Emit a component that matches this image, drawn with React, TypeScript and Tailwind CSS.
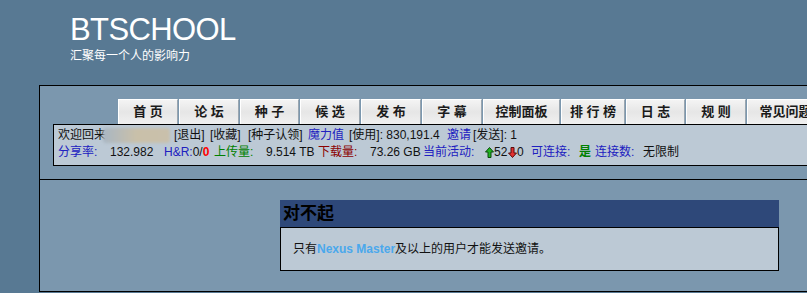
import React from 'react';

const tabs = [
  { label: '首 页', w: 'w-[60px]' },
  { label: '论 坛', w: 'w-[60px]' },
  { label: '种 子', w: 'w-[59px]' },
  { label: '候 选', w: 'w-[60px]' },
  { label: '发 布', w: 'w-[60px]' },
  { label: '字 幕', w: 'w-[60px]' },
  { label: '控制面板', w: 'w-[77px]' },
  { label: '排 行 榜', w: 'w-[64px]' },
  { label: '日 志', w: 'w-[59px]' },
  { label: '规 则', w: 'w-[60px]' },
  { label: '常见问题', w: 'w-[77px]' },
];

const UpArrow = () => (
  <svg width="9" height="11" viewBox="0 0 9 11">
    <path d="M4.5 0.5 L8.5 5 L6 5 L6 10.5 L3 10.5 L3 5 L0.5 5 Z" fill="#22b322" stroke="#0b4a0b" strokeWidth="1" />
  </svg>
);

const DownArrow = () => (
  <svg width="9" height="11" viewBox="0 0 9 11">
    <path d="M4.5 10.5 L8.5 6 L6 6 L6 0.5 L3 0.5 L3 6 L0.5 6 Z" fill="#e23030" stroke="#5a0b0b" strokeWidth="1" />
  </svg>
);

const App = () => {
  return (
    <div
      className="w-full h-[293px] overflow-hidden bg-[#587993] text-[12px]"
      style={{ fontFamily: '"Liberation Sans", "Noto Sans CJK SC", sans-serif' }}
    >
      {/* Header */}
      <div className="h-[85px] pl-[70px] pt-[12px] text-white">
        <div className="text-[31px] leading-[36px] tracking-[-0.6px]">BTSCHOOL</div>
        <div className="text-[12px] leading-[16px]">汇聚每一个人的影响力</div>
      </div>

      {/* Main panel */}
      <div className="ml-[39px] w-[800px] border border-black bg-[#7B97AE]">
        <div className="pt-[13px] pl-[13px] pb-[13px] border-b border-black">
          {/* Nav tabs */}
          <div className="flex gap-[1px] pl-[65px]">
            {tabs.map((t) => (
              <div
                key={t.label}
                className={`${t.w} h-[25px] flex items-center justify-center border-t border-l border-white border-r border-r-[#9aa6b0] bg-gradient-to-b from-[#f4f4f4] via-[#e6e6e6] to-[#f0f0f0] font-bold text-[13px] text-[#1a1a1a] whitespace-pre`}
              >
                {t.label}
              </div>
            ))}
          </div>

          {/* Info box */}
          <div className="h-[42px] border border-black bg-[#BCC9D5] pl-[4px] pt-[2px] leading-[17px] text-[#111] whitespace-nowrap">
            <div className="flex items-center">
              <span className="w-[48px]">欢迎回来</span>
              <span className="w-[67px] h-[15px] -ml-[3px] mr-[4px] rounded-[3px] bg-gradient-to-r from-[#a9b6c2] via-[#c9c0a9] to-[#c9c0ab] blur-[1.5px]" />
              <span className="w-[36px]">[退出]</span>
              <span className="w-[38px]">[收藏]</span>
              <span className="w-[60px]">[种子认领]</span>
              <span className="w-[41px] text-[#2020c0]">魔力值</span>
              <span className="w-[98px]">[使用]: 830,191.4</span>
              <span className="w-[26px] text-[#2020c0]">邀请</span>
              <span>[发送]: 1</span>
            </div>
            <div className="flex items-center">
              <span className="w-[52px] text-[#2020c0]">分享率:</span>
              <span className="w-[54px]">132.982</span>
              <span className="w-[50px]">
                <span className="text-[#2020c0]">H&amp;R:</span>0/<span className="text-[#ff0000] font-bold">0</span>
              </span>
              <span className="w-[52px] text-[#008000]">上传量:</span>
              <span className="w-[52px]">9.514 TB</span>
              <span className="w-[52px] text-[#8b0000]">下载量:</span>
              <span className="w-[53px]">73.26 GB</span>
              <span className="w-[62px] text-[#2020c0]">当前活动:</span>
              <span className="w-[9px] flex items-center"><UpArrow /></span>
              <span className="w-[14px]">52</span>
              <span className="w-[9px] flex items-center"><DownArrow /></span>
              <span className="w-[14px]">0</span>
              <span className="w-[48px] text-[#2020c0]">可连接:</span>
              <span className="w-[16px] text-[#008000] font-bold">是</span>
              <span className="w-[48px] text-[#2020c0]">连接数:</span>
              <span>无限制</span>
            </div>
          </div>
        </div>

        {/* Content */}
        <div className="h-[111px] pt-[20px] pl-[240px]">
          <div className="w-[499px]">
            <div className="h-[27px] bg-[#2E4879] pl-[3px] flex items-center text-[17px] font-bold text-black">
              对不起
            </div>
            <div className="h-[44px] border border-black bg-[#BCC9D5] pl-[12px] flex items-center text-[#111]">
              <span>只有</span>
              <span className="font-bold text-[#4aa8ec]">Nexus Master</span>
              <span>及以上的用户才能发送邀请。</span>
            </div>
          </div>
        </div>
      </div>
    </div>
  );
};

export default App;
